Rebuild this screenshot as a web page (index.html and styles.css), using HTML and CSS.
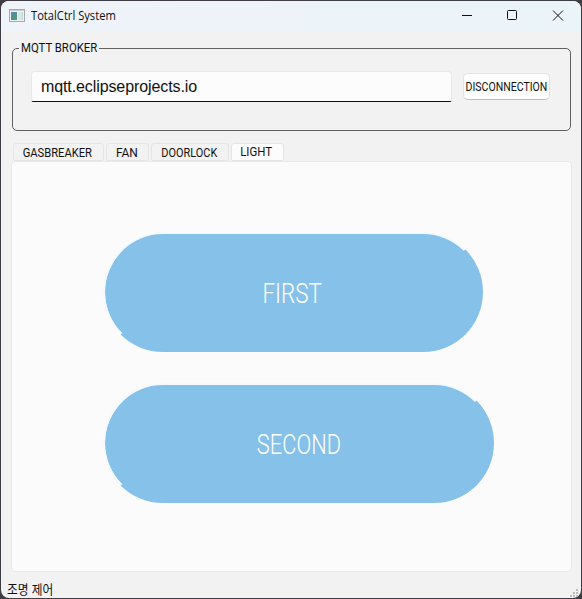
FILE: index.html
```html
<!DOCTYPE html>
<html lang="ko">
<head>
<meta charset="utf-8">
<title>TotalCtrl System</title>
<link rel="stylesheet" href="styles.css">
</head>
<body>
<div class="window">
  <header class="titlebar">
    <svg class="app-icon" width="16" height="14" viewBox="0 0 16 14">
      <defs><linearGradient id="g" x1="0" y1="0" x2="0.4" y2="1"><stop offset="0" stop-color="#5689b8"/><stop offset="1" stop-color="#4b9b72"/></linearGradient></defs>
      <rect x=".5" y=".5" width="15" height="12" fill="#f1f3f4" stroke="#a5a9ac"/>
      <path d="M1 1.5h14" stroke="#c8cccf"/>
      <rect x="2" y="3" width="6" height="8" fill="url(#g)"/>
      <rect x="9" y="3" width="3" height="8" fill="#dce5e9"/>
      <rect x="12.5" y="3" width="1.5" height="8" fill="#c2d8cf"/>
    </svg>
    <span class="title"><span class="fit title-fit">TotalCtrl System</span></span>
    <svg class="controls" width="104" height="12" viewBox="0 0 104 12" fill="none" stroke="#111">
      <path d="M0 5.5h10"/>
      <rect x="45.5" y=".5" width="9" height="9" rx="1"/>
      <path d="M91 .5l10 10M101 .5l-10 10"/>
    </svg>
  </header>
  <fieldset class="broker">
    <legend><span class="fit lg">MQTT BROKER</span></legend>
    <input class="host" type="text" value="mqtt.eclipseprojects.io">
    <button class="disconnect"><span class="fit dc">DISCONNECTION</span></button>
  </fieldset>
  <nav class="tabs">
    <div class="tab t1"><span class="fit gb">GASBREAKER</span></div>
    <div class="tab t2"><span class="fit fan">FAN</span></div>
    <div class="tab t3"><span class="fit dl">DOORLOCK</span></div>
    <div class="tab t4 active"><span class="fit lt">LIGHT</span></div>
  </nav>
  <main class="pane">
    <button class="pill first"><span class="fit">FIRST</span></button>
    <button class="pill second"><span class="fit">SECOND</span></button>
  </main>
  <footer class="status">
    <span class="fit ko">조명 제어</span>
    <svg class="grip" width="8" height="8" viewBox="0 0 8 8" fill="#bdbdbd"><path d="M6 0h2v2H6zM3 3h2v2H3zM6 3h2v2H6zM0 6h2v2H0zM3 6h2v2H3zM6 6h2v2H6z"/></svg>
  </footer>
</div>
</body>
</html>
```
FILE: styles.css
```css
* { box-sizing: border-box; }
body {
  margin: 0;
  height: 599px;
  padding: 1px;
  overflow: hidden;
  background: #3d3d43;
  font-family: Roboto, "Liberation Sans", sans-serif;
  color: #111;
}
.window {
  display: flex;
  flex-direction: column;
  height: 597px;
  border-radius: 8px;
  overflow: hidden;
  background: #f2f2f2;
}
button { font-family: inherit; color: inherit; padding: 0; }
.fit { display: inline-block; white-space: nowrap; }
.titlebar {
  display: flex;
  align-items: center;
  height: 30px;
  padding: 0 15px 0 8px;
  background: linear-gradient(90deg, #eff3fa, #ebf4f8);
}
.title {
  flex: 1;
  margin-left: 6px;
  font: 12px/16px "Open Sans", sans-serif;
}
.title-fit { transform: scaleX(.93); transform-origin: left; }
.broker {
  display: flex;
  gap: 11px;
  height: 90px;
  margin: 10px 10px 0 11px;
  padding: 15px 20px 0 18px;
  border: 1px solid #616161;
  border-radius: 5px;
}
legend {
  height: 15px;
  width: 80px;
  margin-left: -12px;
  padding: 0 2px;
  font-size: 13px;
  line-height: 13px;
}
.lg { transform: scaleX(.875); transform-origin: left; }
.host {
  width: 421px;
  flex: none;
  height: 31px;
  padding: 0 9px;
  border: 1px solid #e8e8e8;
  border-bottom: 1px solid #111;
  border-radius: 4px 4px 2px 2px;
  background: #fcfcfc;
  font: 16px "Liberation Sans", sans-serif;
  letter-spacing: -.1px;
  color: #111;
}
.disconnect {
  display: flex;
  flex: none;
  align-items: center;
  justify-content: center;
  width: 87px;
  height: 27px;
  margin-top: 2px;
  border: 1px solid #e3e3e3;
  border-bottom-color: #bdbdbd;
  border-radius: 5px;
  background: #fdfdfd;
  font-size: 13px;
}
.dc { transform: scaleX(.81); }
.tabs {
  display: flex;
  align-items: flex-end;
  gap: 2px;
  height: 19px;
  margin: 11px 0 0 12px;
  font-size: 13px;
  line-height: 18px;
}
.tab {
  display: flex;
  justify-content: center;
  height: 18px;
  border: 1px solid #e5e5e5;
  border-radius: 3px 3px 2px 2px;
}
.t1 { width: 91px; }
.t2 { width: 43px; }
.t3 { width: 78px; }
.t4 { width: 53px; }
.active { background: #fcfcfc; line-height: 16px; }
.gb { transform: translateX(-1px) scaleX(.86); }
.fan { transform: translateX(-1px) scaleX(.92); }
.dl { transform: translateX(-1px) scaleX(.84); }
.lt { transform: translateX(-1px) scaleX(.88); }
.pane {
  display: flex;
  flex-direction: column;
  gap: 31px;
  height: 411px;
  margin: 0 9px 0 10px;
  padding: 70px 0 0 91px;
  border: 1px solid #e9e9e9;
  border-radius: 4px;
  background: #fbfbfb;
}
.pill {
  height: 120px;
  border: 2px solid;
  border-color: #f4faff #86c1e9 #86c1e9 #f4faff;
  border-radius: 60px;
  background:
    linear-gradient(90deg, transparent 20px, #86c1e9 20px) border-box,
    linear-gradient(#86c1e9, #86c1e9) padding-box;
  color: #fff;
  font-size: 28px;
  font-weight: 300;
}
.first { width: 380px; }
.second { width: 391px; }
.first .fit { transform: translate(-1px, 1px) scaleX(.8); }
.second .fit { transform: translateY(1px) scaleX(.78); }
.status {
  display: flex;
  justify-content: space-between;
  flex: 1;
  padding: 9px 3px 0 6px;
}
.ko {
  font: 13px/16px "Noto Sans CJK KR", sans-serif;
  transform: scaleX(.9);
  transform-origin: left;
}
.grip { margin-top: 8px; }
```
